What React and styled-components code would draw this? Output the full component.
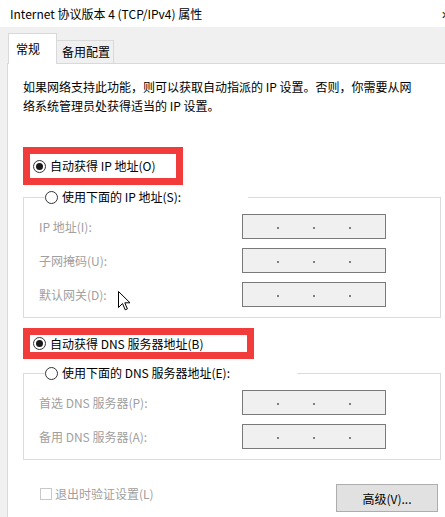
import React from "react";
import styled, { createGlobalStyle } from "styled-components";

const GlobalStyle = createGlobalStyle`
  html, body {
    margin: 0;
    padding: 0;
    background: #f0f0f0;
  }
  body {
    font-family: "Noto Sans CJK SC", "Noto Sans", sans-serif;
    font-size: 12px;
    color: #000;
  }
  * {
    box-sizing: border-box;
  }
`;

const Window = styled.div`
  position: relative;
  width: 445px;
  height: 517px;
  overflow: hidden;
  display: flex;
  flex-direction: column;
  background: #f0f0f0;
`;

const TitleBar = styled.div`
  flex: none;
  height: 27px;
  background: #fff;
  display: flex;
  align-items: center;
  justify-content: space-between;
  padding-left: 10px;
`;

const Title = styled.span`
  font-size: 12px;
  line-height: 1;
`;

const Close = styled.span`
  margin-right: -5px;
  font-size: 11px;
  color: #222;
`;

const TabStrip = styled.div`
  flex: none;
  height: 36px;
  display: flex;
  align-items: flex-end;
  padding-left: 8px;
`;

const Tab = styled.div`
  position: relative;
  z-index: ${p => (p.$active ? 2 : 1)};
  width: ${p => p.$width}px;
  height: ${p => (p.$active ? 31 : 24)}px;
  margin-bottom: -1px;
  padding-left: ${p => (p.$active ? 7 : 5)}px;
  background: ${p => (p.$active ? "#fff" : "#f0f0f0")};
  border: 1px solid #d9d9d9;
  border-bottom: ${p => (p.$active ? "none" : "1px solid #d9d9d9")};
  ${p => !p.$active && "border-left: none;"}
  display: flex;
  align-items: center;
  line-height: 1;
`;

const Panel = styled.div`
  flex: 1;
  margin-left: 7px;
  background: #fff;
  border-left: 1px solid #d9d9d9;
  border-top: 1px solid #d9d9d9;
  padding: 13px 0 0 15px;
  display: flex;
  flex-direction: column;
`;

const Description = styled.p`
  margin: 0;
  line-height: 19px;
`;

const Highlight = styled.div`
  width: ${p => p.$width}px;
  height: ${p => p.$height}px;
  margin-top: ${p => p.$top}px;
  border: 7px solid #f23b3b;
  padding-left: 3px;
  display: flex;
  align-items: center;
  background: #fff;
`;

const RadioRow = styled.label`
  display: flex;
  align-items: center;
  gap: 4px;
  line-height: 18px;
`;

const Radio = styled.span`
  width: 13px;
  height: 13px;
  border-radius: 50%;
  border: 1px solid #333;
  background: #fff;
  display: grid;
  place-items: center;
  &::after {
    content: "";
    width: 7px;
    height: 7px;
    border-radius: 50%;
    background: ${p => (p.$checked ? "#1a1a1a" : "transparent")};
  }
`;

const Group = styled.fieldset`
  margin: ${p => p.$top}px 4px 0 0;
  padding: 8px 0 10px 15px;
  border: 1px solid #dcdcdc;
  min-width: 0;
  display: flex;
  flex-direction: column;
  gap: 9px;
`;

const Legend = styled.legend`
  margin-left: 6px;
  padding: 0;
  width: ${p => p.$width}px;
  background: #fff;
`;

const FieldRow = styled.div`
  display: flex;
  align-items: center;
  height: 25px;
`;

const FieldLabel = styled.span`
  width: 203px;
  color: #a0a0a0;
  line-height: 1;
`;

const IpBox = styled.div`
  width: 144px;
  height: 25px;
  border: 1px solid #7a7a7a;
  background: #f0f0f0;
  display: grid;
  grid-template-columns: 1fr auto 1fr auto 1fr auto 1fr;
  align-items: center;
`;

const Dot = styled.span`
  width: 2px;
  height: 2px;
  margin-top: 3px;
  background: #808080;
`;

const Footer = styled.div`
  margin-top: 24px;
  padding-right: 7px;
  display: flex;
  align-items: flex-start;
  justify-content: space-between;
`;

const CheckRow = styled.label`
  margin-top: 2px;
  padding-left: 17px;
  display: flex;
  align-items: center;
  gap: 3px;
  color: #a0a0a0;
  line-height: 16px;
`;

const CheckBox = styled.span`
  width: 12px;
  height: 12px;
  border: 1px solid #c8c8c8;
  background: #fff;
`;

const Button = styled.button`
  width: 102px;
  height: 28px;
  background: #e1e1e1;
  border: 1px solid #adadad;
  font-family: inherit;
  font-size: 12px;
  color: #000;
  padding: 0;
`;

const Cursor = styled.svg`
  position: absolute;
  left: 118px;
  top: 291px;
`;

const IpField = ({ label }) => (
  <FieldRow>
    <FieldLabel>{label}</FieldLabel>
    <IpBox>
      <span />
      <Dot />
      <span />
      <Dot />
      <span />
      <Dot />
      <span />
    </IpBox>
  </FieldRow>
);

const App = () => (
  <>
    <GlobalStyle />
    <Window>
      <TitleBar>
        <Title>Internet 协议版本 4 (TCP/IPv4) 属性</Title>
        <Close>✕</Close>
      </TitleBar>
      <TabStrip>
        <Tab $active $width={49}>常规</Tab>
        <Tab $width={57}>备用配置</Tab>
      </TabStrip>
      <Panel>
        <Description>
          如果网络支持此功能，则可以获取自动指派的 IP 设置。否则，你需要从网
          <br />
          络系统管理员处获得适当的 IP 设置。
        </Description>

        <Highlight $width={160} $height={38} $top={32}>
          <RadioRow>
            <Radio $checked />
            自动获得 IP 地址(O)
          </RadioRow>
        </Highlight>
        <Group $top={3}>
          <Legend $width={203}>
            <RadioRow>
              <Radio />
              使用下面的 IP 地址(S):
            </RadioRow>
          </Legend>
          <IpField label="IP 地址(I):" />
          <IpField label="子网掩码(U):" />
          <IpField label="默认网关(D):" />
        </Group>

        <Highlight $width={231} $height={31} $top={10}>
          <RadioRow>
            <Radio $checked />
            自动获得 DNS 服务器地址(B)
          </RadioRow>
        </Highlight>
        <Group $top={5}>
          <Legend $width={252}>
            <RadioRow>
              <Radio />
              使用下面的 DNS 服务器地址(E):
            </RadioRow>
          </Legend>
          <IpField label="首选 DNS 服务器(P):" />
          <IpField label="备用 DNS 服务器(A):" />
        </Group>

        <Footer>
          <CheckRow>
            <CheckBox />
            退出时验证设置(L)
          </CheckRow>
          <Button>高级(V)...</Button>
        </Footer>
      </Panel>
      <Cursor width="13" height="20" viewBox="0 0 13 20">
        <path
          d="M0.5 0.5 L0.5 16.5 L4.5 12.5 L7.2 18.8 L9.4 17.9 L6.8 11.8 L12 11.8 Z"
          fill="#fff"
          stroke="#000"
          strokeWidth="1"
          strokeLinejoin="miter"
        />
      </Cursor>
    </Window>
  </>
);

export default App;
